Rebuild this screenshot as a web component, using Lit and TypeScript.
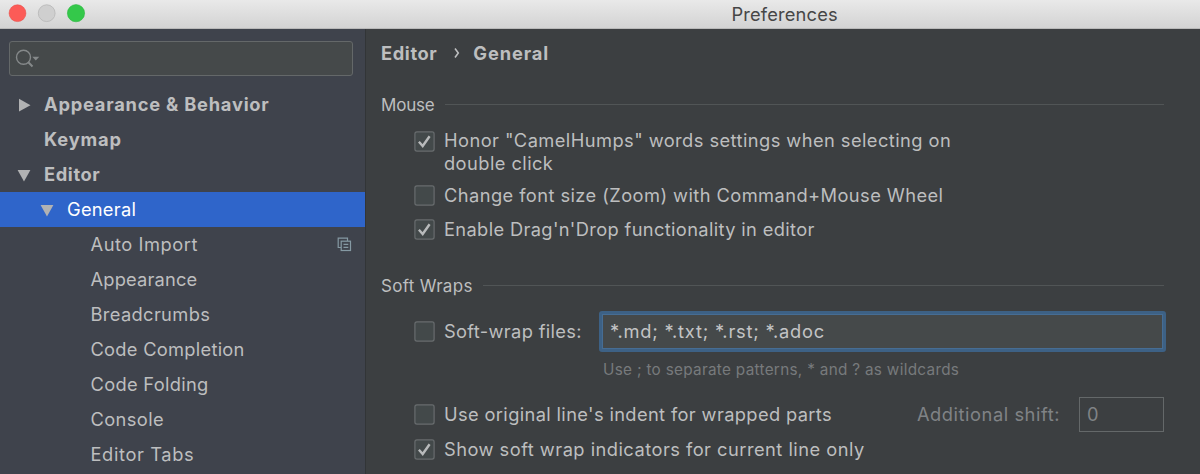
import { LitElement, html, css, svg, nothing } from "lit";
import { customElement, property } from "lit/decorators.js";

interface TreeRow {
  label: string;
  level: number;
  arrow?: "open" | "closed";
  selected?: boolean;
  project?: boolean;
  spacing: number;
}

const TREE: TreeRow[] = [
  { label: "Appearance & Behavior", level: 0, arrow: "closed", spacing: 0.77 },
  { label: "Keymap", level: 0, spacing: 0.85 },
  { label: "Editor", level: 0, arrow: "open", spacing: 0.6 },
  { label: "General", level: 1, arrow: "open", selected: true, spacing: 0.25 },
  { label: "Auto Import", level: 2, project: true, spacing: 0.55 },
  { label: "Appearance", level: 2, spacing: 0.17 },
  { label: "Breadcrumbs", level: 2, spacing: 0.35 },
  { label: "Code Completion", level: 2, spacing: 0.27 },
  { label: "Code Folding", level: 2, spacing: 0.3 },
  { label: "Console", level: 2, spacing: 0.4 },
  { label: "Editor Tabs", level: 2, spacing: 0.62 },
];

@customElement("pref-check")
class PrefCheck extends LitElement {
  @property({ type: Boolean }) checked = false;
  @property({ type: Number }) spacing = 0.4;

  static styles = css`
    :host { display: flex; align-items: flex-start; }
    .box { display: block; flex: none; width: 21px; height: 21px; margin-right: 9px; }
    .text { line-height: 23px; margin-top: var(--text-lift, -1px); white-space: pre; }
  `;

  render() {
    return html`
      <svg class="box" viewBox="0 0 21 21">
        <rect x="0.9" y="0.9" width="19.2" height="19.2" rx="2" fill="#43494a" stroke="#686c6e" stroke-width="1.2" />
        ${this.checked
          ? svg`<path d="M4.9 10.8 L8.7 15 L15.6 5.2" fill="none" stroke="#b8babb" stroke-width="2.4" />`
          : nothing}
      </svg>
      <span class="text" style="letter-spacing:${this.spacing}px"><slot></slot></span>
    `;
  }
}

@customElement("pref-section")
class PrefSection extends LitElement {
  @property({ type: Number }) spacing = 0;

  static styles = css`
    :host { display: flex; align-items: center; height: 22px; font-size: 17px; line-height: 22px; }
    .title { white-space: pre; margin-right: 10px; }
    .line { flex: 1; height: 1px; background: #515556; margin-top: -1px; }
  `;

  render() {
    return html`
      <span class="title" style="letter-spacing:${this.spacing}px"><slot></slot></span>
      <span class="line"></span>
    `;
  }
}

@customElement("app-root")
class AppRoot extends LitElement {
  static styles = css`
    * { box-sizing: border-box; }
    :host {
      display: flex; flex-direction: column; width: 1200px; height: 474px; overflow: hidden;
      background: #3c3f41; color: #bdbebf;
      font-family: Inter, "Liberation Sans", sans-serif; font-size: 18.3px;
    }
    .titlebar {
      flex: none; height: 29px; display: flex; align-items: center;
      background: linear-gradient(#e9e9e9, #d3d3d3); border-bottom: 1px solid #b9b9b9; color: #464646;
    }
    .lights { display: block; width: 100px; height: 28px; }
    .caption { margin-left: 631.5px; letter-spacing: 0.15px; }
    .body { flex: 1; display: flex; min-height: 0; }
    .side { flex: none; width: 366px; background: #3f434c; border-right: 1px solid #323537; }
    .search {
      height: 35px; margin: 12px 12px 11px 9px; border: 1px solid #646869; border-radius: 3px;
      background: #45494a;
    }
    .search svg { display: block; margin: 5px 0 0 5px; }
    .row { height: 35px; display: flex; align-items: center; white-space: pre; }
    .row.selected { background: #2f65ca; color: #fff; }
    .row .label { flex: 1; line-height: 22px; padding-bottom: 1px; }
    .level0 { padding-left: 16px; font-weight: 700; }
    .level1 { padding-left: 39px; }
    .level2 { padding-left: 62.5px; }
    .arrow { display: block; width: 16px; height: 16px; margin-right: 12px; }
    .project { display: block; margin-right: 13px; }
    .main { flex: 1; padding: 12px 36px 0 15px; }
    .crumbs { display: flex; align-items: center; height: 24px; font-weight: 700; letter-spacing: 0.6px; }
    .crumbs .current { letter-spacing: 0.85px; }
    .chev { display: block; margin: 0 12px 0 16px; }
    .s1 { margin-top: 29px; }
    .s2 { margin-top: 34px; }
    .opts { padding-left: 33px; display: flex; flex-direction: column; }
    .c1 { margin-top: 15px; --text-lift: -2px; }
    .c2 { margin-top: 10px; }
    .c3 { margin-top: 12px; }
    .wrap { display: flex; align-items: center; margin: 14px -2px 0 0; }
    .field {
      flex: 1; margin-left: 17px; height: 41px; border: 3px solid #3d6185; border-radius: 3px;
      background: #45494a; color: #c3c4c5; padding-left: 8px; line-height: 35px; white-space: pre;
      box-shadow: inset 0 0 0 1px #466d94; letter-spacing: 0.79px;
    }
    .hint { margin: 7px 0 0 189px; font-size: 15.3px; line-height: 22px; color: #777a7c; white-space: pre; letter-spacing: 0.3px; }
    .indent { display: flex; align-items: center; margin-top: 16px; }
    .shift { margin-left: auto; color: #808386; white-space: pre; letter-spacing: 0.55px; line-height: 22px; padding-bottom: 1px; }
    .num { width: 85px; height: 35px; margin-left: 19px; border: 1px solid #646869; padding-left: 7px; line-height: 33px; color: #808386; }
    .c5 { margin-top: 7px; }
  `;

  private row(r: TreeRow) {
    return html`
      <div class="row level${r.level} ${r.selected ? "selected" : ""}">
        <svg class="arrow" viewBox="0 0 16 16">
          ${r.arrow === "closed" ? svg`<path d="M3 1.8 L14.5 8.2 L3 14.6 Z" fill="#b1b2b3" />` : nothing}
          ${r.arrow === "open" ? svg`<path d="M1.6 3 H14.4 L8 14.4 Z" fill="#b1b2b3" />` : nothing}
        </svg>
        <span class="label" style="letter-spacing:${r.spacing}px">${r.label}</span>
        ${r.project
          ? html`<svg class="project" width="15" height="15" viewBox="0 0 15 15" fill="none" stroke="#8599a3" stroke-width="1.2">
              <path d="M4 10.5 H1.2 V1.2 H10.5 V4" />
              <rect x="4.2" y="4.2" width="9.3" height="9.3" />
              <path d="M6.5 7.4 H11.3 M6.5 10.4 H11.3" />
            </svg>`
          : nothing}
      </div>
    `;
  }

  render() {
    return html`
      <div class="titlebar">
        <svg class="lights" viewBox="0 0 100 28">
          <circle cx="17.5" cy="13.2" r="8.4" fill="#fc5b57" stroke="#e9504c" stroke-width="0.6" />
          <circle cx="46.7" cy="13.2" r="8.4" fill="#cfcfcf" stroke="#b6b6b6" stroke-width="0.8" />
          <circle cx="76" cy="13.2" r="8.6" fill="#34c84a" stroke="#2bb940" stroke-width="0.6" />
        </svg>
        <span class="caption">Preferences</span>
      </div>
      <div class="body">
        <div class="side">
          <div class="search">
            <svg width="28" height="24" viewBox="0 0 28 24">
              <circle cx="8.5" cy="10.3" r="7" fill="none" stroke="#85898a" stroke-width="1.4" />
              <path d="M13.3 15.3 L17.5 19.5" stroke="#85898a" stroke-width="2" />
              <path d="M17.3 9.8 H24.3 L20.8 13.5 Z" fill="#85898a" />
            </svg>
          </div>
          ${TREE.map((r) => this.row(r))}
        </div>
        <div class="main">
          <div class="crumbs">
            <span>Editor</span>
            <svg class="chev" width="8" height="12" viewBox="0 0 8 12">
              <path d="M2 1.5 L5.3 6 L2 10.5" fill="none" stroke="#bdbebf" stroke-width="1.6" />
            </svg>
            <span class="current">General</span>
          </div>
          <pref-section class="s1" spacing="-0.2">Mouse</pref-section>
          <div class="opts">
            <pref-check class="c1" checked spacing="0.43">Honor "CamelHumps" words settings when selecting on<br />double click</pref-check>
            <pref-check class="c2" spacing="0.42">Change font size (Zoom) with Command+Mouse Wheel</pref-check>
            <pref-check class="c3" checked spacing="0.35">Enable Drag'n'Drop functionality in editor</pref-check>
          </div>
          <pref-section class="s2" spacing="0.3">Soft Wraps</pref-section>
          <div class="opts">
            <div class="wrap">
              <pref-check spacing="0.34">Soft-wrap files:</pref-check>
              <div class="field">*.md; *.txt; *.rst; *.adoc</div>
            </div>
            <div class="hint">Use ; to separate patterns, * and ? as wildcards</div>
            <div class="indent">
              <pref-check spacing="0.36">Use original line's indent for wrapped parts</pref-check>
              <span class="shift">Additional shift:</span>
              <div class="num">0</div>
            </div>
            <pref-check class="c5" checked spacing="0.47">Show soft wrap indicators for current line only</pref-check>
          </div>
        </div>
      </div>
    `;
  }
}
